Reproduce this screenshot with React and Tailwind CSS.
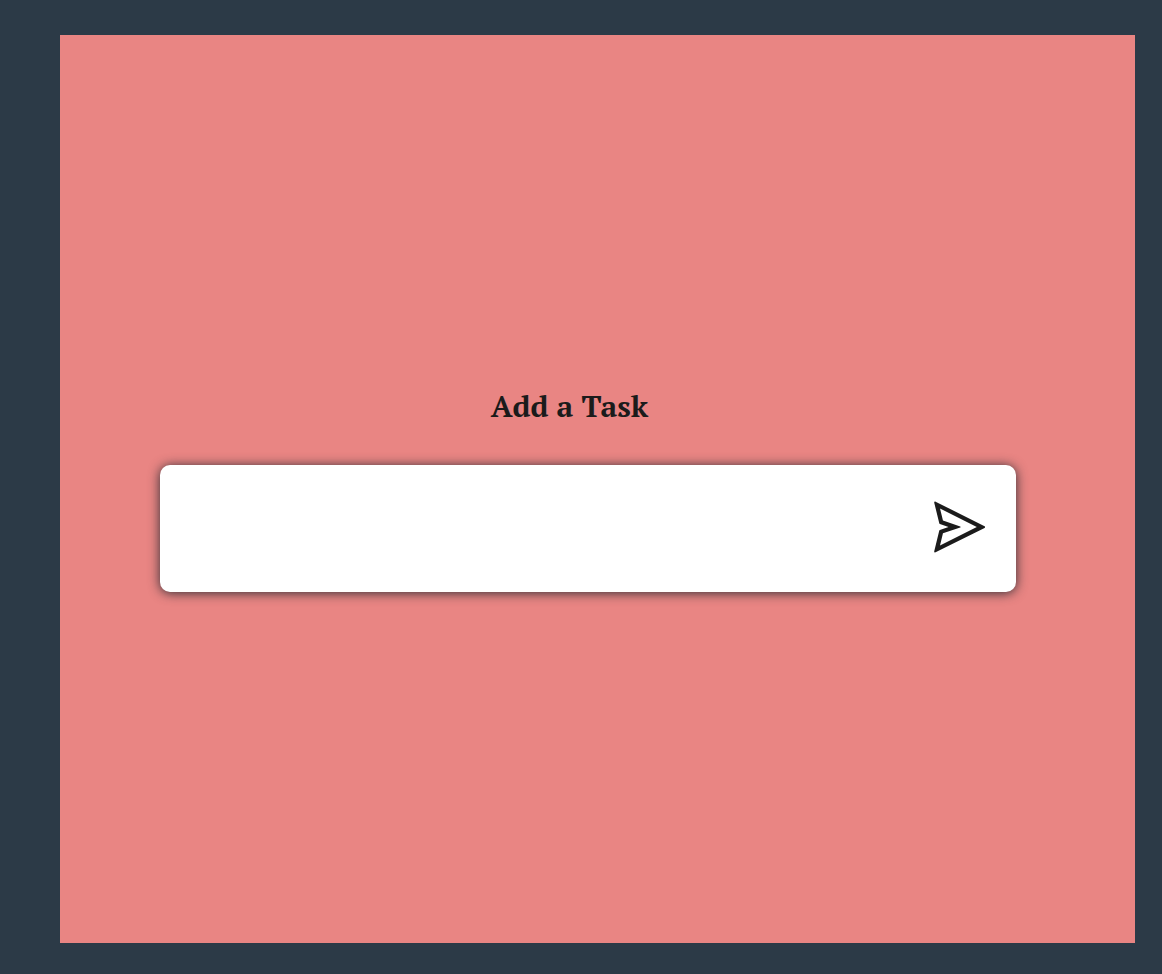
import { useState } from "react";
import { AiOutlineSend } from "react-icons/ai";

export default function App() {
  const [task, setTask] = useState("");

  return (
    <div className="flex min-h-screen bg-[#2c3a47] pt-[35px] pr-[27px] pb-[31px] pl-[60px] text-[#1b1b1b]">
      <main className="flex flex-1 flex-col justify-center bg-[#e98583] pr-[119px] pl-[100px]">
        <form className="flex flex-col gap-[39px]" onSubmit={(e) => e.preventDefault()}>
          <label
            htmlFor="task"
            className="pr-[37px] text-center font-['PT_Serif','Liberation_Serif',serif] text-[30px] leading-10 font-bold"
          >
            Add a Task
          </label>
          <div className="flex h-[127px] items-center rounded-[10px] bg-white pr-[26px] pb-[3px] pl-8 shadow-[0_1px_12px_#2c2c34]">
            <input
              id="task"
              type="text"
              value={task}
              onChange={(e) => setTask(e.target.value)}
              className="h-full min-w-0 flex-1 bg-transparent font-['PT_Serif','Liberation_Serif',serif] text-[30px] outline-none"
            />
            <button type="submit" aria-label="Add task" className="cursor-pointer">
              <AiOutlineSend className="size-[60px]" />
            </button>
          </div>
        </form>
      </main>
    </div>
  );
}
